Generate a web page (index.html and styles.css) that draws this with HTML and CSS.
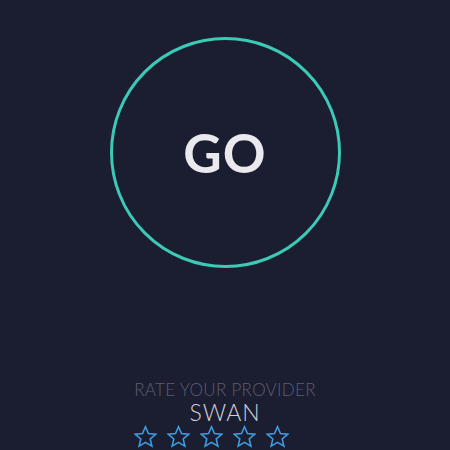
FILE: index.html
```html
<!DOCTYPE html>
<html lang="en">
<head>
  <meta charset="UTF-8">
  <meta name="viewport" content="width=device-width, initial-scale=1.0">
  <title>Speed Test</title>
  <link rel="stylesheet" href="styles.css">
</head>
<body>

<div class="screen">
  <div class="go-wrap">
    <button type="button" class="go-button">GO</button>
  </div>

  <div class="rate-container">
    <div class="rate-label">RATE YOUR PROVIDER</div>
    <div class="provider">SWAN</div>
    <div class="stars">
      <svg class="star" viewBox="0 0 24 24"><path d="M12 1.8l3.1 7.1 7.6.7-5.8 5 1.8 7.6L12 18.2l-6.7 4 1.8-7.6-5.8-5 7.6-.7z"/></svg>
      <svg class="star" viewBox="0 0 24 24"><path d="M12 1.8l3.1 7.1 7.6.7-5.8 5 1.8 7.6L12 18.2l-6.7 4 1.8-7.6-5.8-5 7.6-.7z"/></svg>
      <svg class="star" viewBox="0 0 24 24"><path d="M12 1.8l3.1 7.1 7.6.7-5.8 5 1.8 7.6L12 18.2l-6.7 4 1.8-7.6-5.8-5 7.6-.7z"/></svg>
      <svg class="star" viewBox="0 0 24 24"><path d="M12 1.8l3.1 7.1 7.6.7-5.8 5 1.8 7.6L12 18.2l-6.7 4 1.8-7.6-5.8-5 7.6-.7z"/></svg>
      <svg class="star" viewBox="0 0 24 24"><path d="M12 1.8l3.1 7.1 7.6.7-5.8 5 1.8 7.6L12 18.2l-6.7 4 1.8-7.6-5.8-5 7.6-.7z"/></svg>
    </div>
  </div>
</div>

</body>
</html>
```

FILE: styles.css
```css
html,
body {
  margin: 0;
  padding: 0;
  height: 100%;
  overflow: hidden;
  background-color: #1b1d31;
}

body {
  font-family: Lato, "Open Sans", sans-serif;
  box-sizing: border-box;
}

.screen {
  display: flex;
  flex-direction: column;
  align-items: center;
  height: 450px;
}

.go-wrap {
  padding-top: 37px;
}

.go-button {
  width: 231px;
  height: 231px;
  border: 3px solid #3ccab6;
  border-radius: 50%;
  background: transparent;
  color: #e9e9ee;
  font-family: Lato, sans-serif;
  font-size: 53px;
  font-weight: 700;
  letter-spacing: 1px;
  padding: 0;
  cursor: pointer;
  box-sizing: border-box;
}

.rate-container {
  margin-top: 112px;
  display: flex;
  flex-direction: column;
  align-items: center;
}

.rate-label {
  color: #5c5f70;
  font-size: 17px;
  font-weight: 300;
  line-height: 20px;
  letter-spacing: 0.3px;
}

.provider {
  color: #cfd0d8;
  font-size: 23px;
  font-weight: 300;
  line-height: 25px;
  letter-spacing: 1px;
}

.stars {
  display: flex;
  gap: 10px;
  margin-right: 28px;
}

.star {
  width: 23px;
  height: 23px;
  fill: none;
  stroke: #3f9de2;
  stroke-width: 1.6;
  stroke-linejoin: miter;
}
```
